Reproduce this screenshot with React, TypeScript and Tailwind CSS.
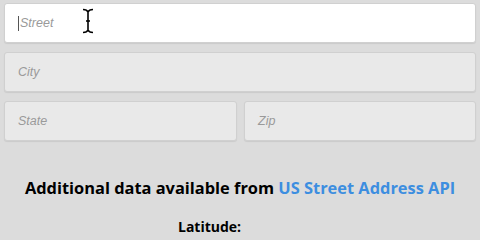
import React from "react";

export default function App() {
  const inputBase =
    "h-[40px] rounded-[3px] border border-[#d0d0d0] flex items-center pl-[13px] text-[12.5px] italic text-[#9a9a9a] shadow-[0_1px_1px_rgba(0,0,0,0.08)]";
  return (
    <div
      className="w-[480px] h-[240px] overflow-hidden bg-[#dcdcdc] relative"
      style={{ fontFamily: "'Liberation Sans', Arial, sans-serif" }}
    >
      <div className="pt-[3px] px-[4px] flex flex-col gap-[9px]">
        <div className={`${inputBase} bg-white relative`}>
          <span className="w-px h-[15px] bg-[#555] mr-px" />
          <span>Street</span>
        </div>
        <div className={`${inputBase} bg-[#e9e9e9]`}>City</div>
        <div className="flex gap-[7px]">
          <div className={`${inputBase} bg-[#e9e9e9] w-[233px]`}>State</div>
          <div className={`${inputBase} bg-[#e9e9e9] flex-1`}>Zip</div>
        </div>
      </div>
      <div
        className="mt-[36px] text-center font-bold text-[16.4px] text-black leading-[22px]"
        style={{ fontFamily: "'Open Sans', sans-serif" }}
      >
        Additional data available from{" "}
        <span className="text-[#3d8ee0]">US Street Address API</span>
      </div>
      <div
        className="mt-[18px] pl-[178px] font-bold text-[14px] text-black leading-[20px]"
        style={{ fontFamily: "'Open Sans', sans-serif" }}
      >
        Latitude:
      </div>
      <svg
        className="absolute left-[82px] top-[8px]"
        width="12"
        height="26"
        viewBox="0 0 12 26"
      >
        <path
          d="M1 1.5 Q5 1.5 6 4 Q7 1.5 11 1.5 M6 4 V22 Q5 24.5 1 24.5 M6 22 Q7 24.5 11 24.5 M4 13 H8"
          stroke="#000"
          strokeWidth="1.6"
          fill="none"
        />
      </svg>
    </div>
  );
}
